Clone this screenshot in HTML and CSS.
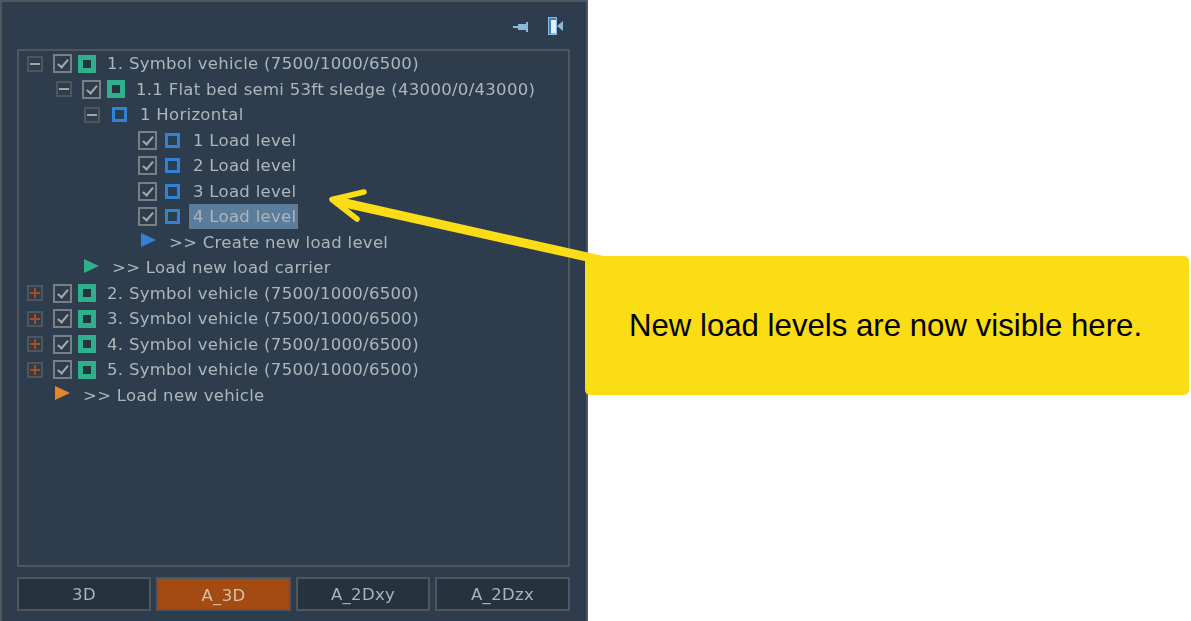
FILE: index.html
```html
<!DOCTYPE html>
<html lang="en">

<head>
    <meta charset="UTF-8">
    <title>Load levels</title>
    <link rel="stylesheet" href="styles.css">
</head>

<body>
    <div class="panel">
        <div class="toolbar">
            <svg class="pin" width="15" height="10" viewBox="0 0 15 10">
                <path d="M0 4h5v2H0z" fill="#8fb8d8"/>
                <path d="M5 2h8V0h2v10h-2V8H5z" fill="#8fb8d8"/>
            </svg>
            <svg class="dock" width="15" height="18" viewBox="0 0 15 18">
                <rect x="0" y="0" width="9" height="18" fill="#8fb8d8"/>
                <rect x="1" y="1" width="7" height="2" fill="#2f82d4"/>
                <rect x="1" y="1" width="2" height="16" fill="#2f82d4"/>
                <rect x="3" y="3" width="5" height="13" fill="#e4f0f8"/>
                <path d="M9 9l6-5v10l-6-5z" fill="#8fb8d8"/>
            </svg>
        </div>

        <div class="tree">
            <div class="row lvl0"><span class="exp minus"></span><span class="chk"></span><span class="sq green"></span><span class="label">1. Symbol vehicle (7500/1000/6500)</span></div>
            <div class="row lvl1"><span class="exp minus"></span><span class="chk"></span><span class="sq green"></span><span class="label">1.1 Flat bed semi 53ft sledge (43000/0/43000)</span></div>
            <div class="row lvl2"><span class="exp minus"></span><span class="sq blue"></span><span class="label">1 Horizontal</span></div>
            <div class="row lvl3"><span class="chk"></span><span class="sq blue"></span><span class="label">1 Load level</span></div>
            <div class="row lvl3"><span class="chk"></span><span class="sq blue"></span><span class="label">2 Load level</span></div>
            <div class="row lvl3"><span class="chk"></span><span class="sq blue"></span><span class="label">3 Load level</span></div>
            <div class="row lvl3"><span class="chk"></span><span class="sq blue"></span><span class="label selected">4 Load level</span></div>
            <div class="row add-level"><span class="tri tri-blue"></span><span class="label">&gt;&gt; Create new load level</span></div>
            <div class="row add-carrier"><span class="tri tri-green"></span><span class="label">&gt;&gt; Load new load carrier</span></div>
            <div class="row lvl0"><span class="exp plus"></span><span class="chk"></span><span class="sq green"></span><span class="label">2. Symbol vehicle (7500/1000/6500)</span></div>
            <div class="row lvl0"><span class="exp plus"></span><span class="chk"></span><span class="sq green"></span><span class="label">3. Symbol vehicle (7500/1000/6500)</span></div>
            <div class="row lvl0"><span class="exp plus"></span><span class="chk"></span><span class="sq green"></span><span class="label">4. Symbol vehicle (7500/1000/6500)</span></div>
            <div class="row lvl0"><span class="exp plus"></span><span class="chk"></span><span class="sq green"></span><span class="label">5. Symbol vehicle (7500/1000/6500)</span></div>
            <div class="row add-vehicle"><span class="tri tri-orange"></span><span class="label">&gt;&gt; Load new vehicle</span></div>
        </div>

        <div class="tabs">
            <button class="tab">3D</button>
            <button class="tab active">A_3D</button>
            <button class="tab">A_2Dxy</button>
            <button class="tab">A_2Dzx</button>
        </div>
    </div>

    <svg class="arrow" width="300" height="90" viewBox="0 0 300 90">
        <path d="M14 16L290 77.5" stroke="#fbdd15" stroke-width="9" fill="none"/>
        <path d="M42 7L10 14.5L35 34" stroke="#fbdd15" stroke-width="5.5" stroke-linecap="round" stroke-linejoin="round" fill="none"/>
        <path d="M7 14.5L24 9L26 24z" fill="#fbdd15"/>
    </svg>

    <div class="callout">New load levels are now visible here.</div>
</body>

</html>
```

FILE: styles.css
```css
body {
    margin: 0;
    height: 621px;
    position: relative;
    overflow: hidden;
    background-color: #fff;
    font-family: "DejaVu Sans", sans-serif;
}

.panel {
    box-sizing: border-box;
    width: 588px;
    height: 621px;
    padding: 0 16px 0 15px;
    background-color: #2e3d4d;
    border: 2px solid #4f565d;
    border-bottom: none;
    display: flex;
    flex-direction: column;
    filter: blur(0.35px);
}

.toolbar {
    height: 47px;
    display: flex;
    justify-content: flex-end;
    align-items: flex-start;
    gap: 20px;
    padding-right: 7px;
    box-sizing: border-box;
}

.pin {
    margin-top: 20px;
}

.dock {
    margin-top: 15px;
}

.tree {
    box-sizing: border-box;
    height: 518px;
    border: 2px solid #4f565d;
}

.row {
    height: 25.5px;
    display: flex;
    align-items: center;
    color: #aeb6bc;
    font-size: 16.5px;
    letter-spacing: 0.3px;
    white-space: nowrap;
}

.lvl0 {
    padding-left: 8px;
}

.lvl1 {
    padding-left: 37px;
}

.lvl2 {
    padding-left: 65px;
}

.lvl3 {
    padding-left: 119px;
}

.add-level {
    padding-left: 122px;
}

.add-carrier {
    padding-left: 65px;
}

.add-vehicle {
    padding-left: 36px;
}

.exp {
    box-sizing: border-box;
    width: 16px;
    height: 16px;
    margin-right: 10px;
    border: 2px solid #50575c;
    position: relative;
    flex: none;
}

.exp::before {
    content: "";
    position: absolute;
    left: 1px;
    top: 5px;
    width: 10px;
    height: 2px;
    background-color: #a0a5a8;
}

.plus::before {
    background-color: #a84f1c;
}

.plus::after {
    content: "";
    position: absolute;
    left: 5px;
    top: 1px;
    width: 2px;
    height: 10px;
    background-color: #a84f1c;
}

.chk {
    box-sizing: border-box;
    width: 19px;
    height: 19px;
    margin-right: 6px;
    border: 2px solid #7a7f83;
    position: relative;
    flex: none;
}

.chk::after {
    content: "";
    position: absolute;
    left: 5px;
    top: 1px;
    width: 4px;
    height: 9px;
    border: solid #a4a8ab;
    border-width: 0 2px 2px 0;
    transform: rotate(40deg);
}

.lvl3 .chk {
    margin-right: 8px;
}

.sq {
    box-sizing: border-box;
    flex: none;
}

.green {
    width: 18px;
    height: 18px;
    margin-right: 11px;
    border: 5px solid #2fb08d;
    background-color: #26323d;
}

.blue {
    width: 15px;
    height: 15px;
    margin-right: 13px;
    border: 3px solid #2f82d4;
}

.lvl2 .exp {
    margin-right: 12px;
}

.lvl3 .label {
    padding: 0 2px 0 4px;
    margin-left: -4px;
}

.selected {
    line-height: 25px;
    background-color: #5b7c9b;
}

.tri {
    width: 0;
    height: 0;
    flex: none;
    border-style: solid;
    border-width: 7px 0 7px 15px;
    border-color: transparent;
    margin-right: 13px;
    position: relative;
    top: -2px;
}

.tri-blue {
    border-left-color: #2f82d4;
}

.tri-green {
    border-left-color: #2fb08d;
}

.tri-orange {
    border-left-color: #e6862a;
}

.tabs {
    margin-top: 10px;
    display: grid;
    grid-template-columns: 134px 135px 134px 135px;
    gap: 5px;
}

.tab {
    height: 34px;
    box-sizing: border-box;
    padding: 0;
    background-color: #26323d;
    border: 2px solid #4f565d;
    color: #a9b4bd;
    font-family: "DejaVu Sans", sans-serif;
    font-size: 16.5px;
    letter-spacing: 0.3px;
}

.tab.active {
    background-color: #a44b12;
    color: #d3c0b0;
    padding-top: 2px;
}

.arrow {
    position: absolute;
    left: 322px;
    top: 184.5px;
}

.callout {
    position: absolute;
    left: 585px;
    top: 256px;
    width: 604px;
    height: 139px;
    padding-right: 3px;
    box-sizing: border-box;
    display: flex;
    align-items: center;
    justify-content: center;
    background-color: #fbdd15;
    border-radius: 5px;
    color: #000;
    font-family: "Liberation Sans", sans-serif;
    font-size: 31.2px;
}
```
